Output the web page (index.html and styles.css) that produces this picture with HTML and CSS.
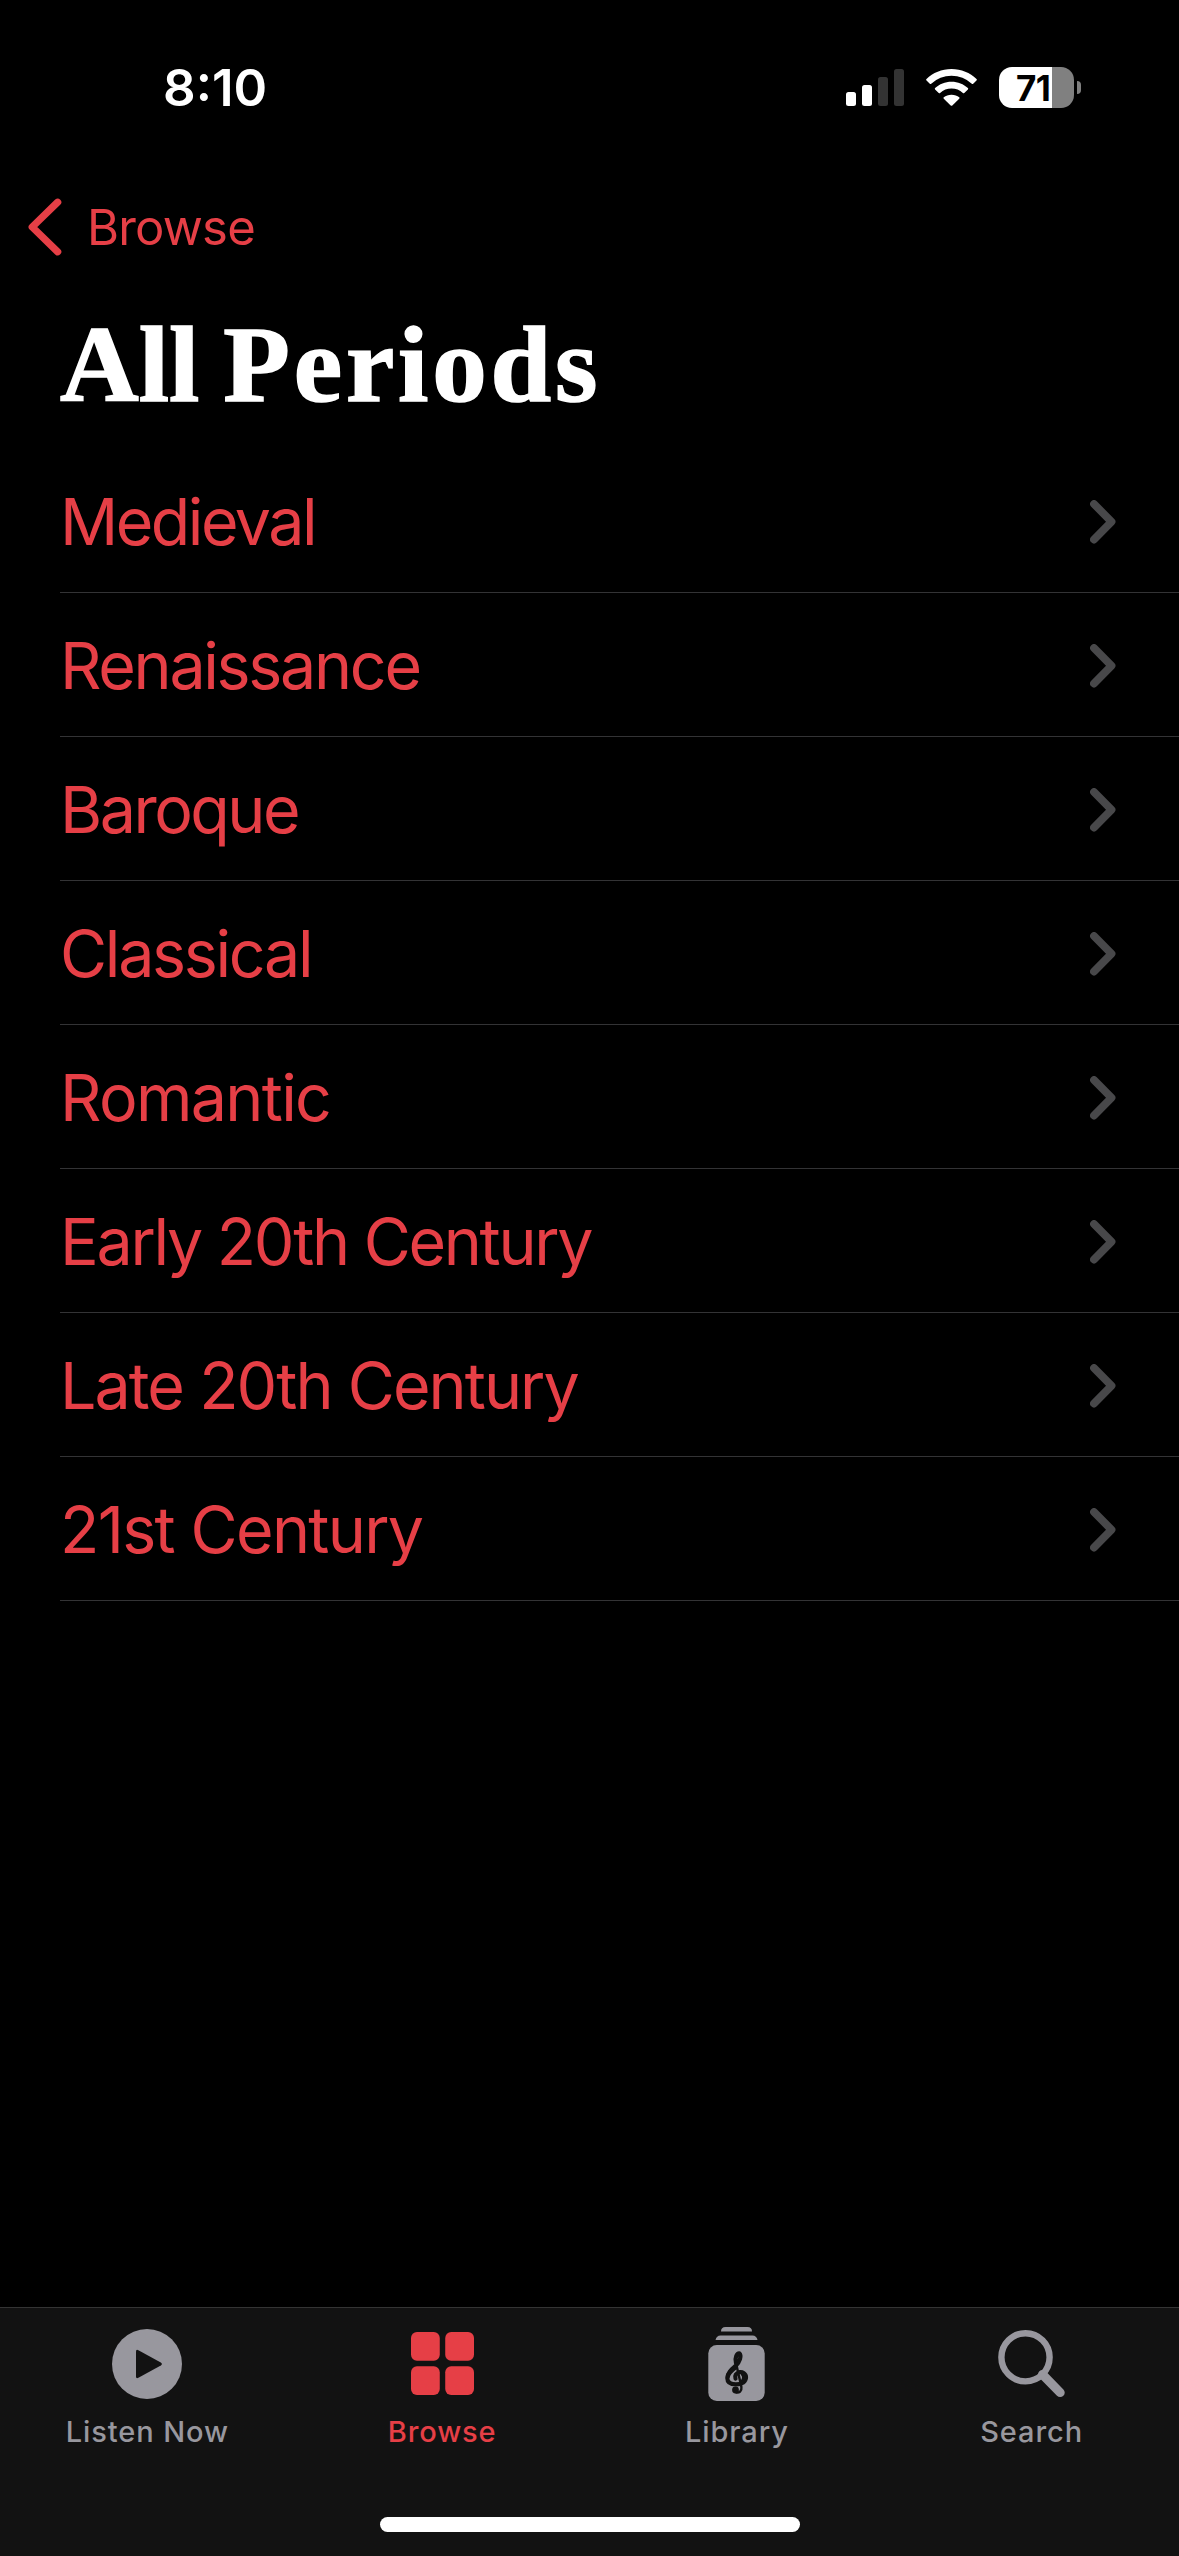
FILE: index.html
```html
<!DOCTYPE html>
<html lang="en">
<head>
<meta charset="utf-8">
<title>All Periods</title>
<link rel="stylesheet" href="styles.css">
</head>
<body>
<div class="screen">
  <header class="status">
    <span class="time">8:10</span>
    <div class="status-icons">
      <svg class="signal" width="58" height="37" viewBox="0 0 58 37">
        <rect x="0" y="23" width="10" height="14" rx="2.5"/>
        <rect x="16" y="16" width="10" height="21" rx="2.5"/>
        <rect class="dim" x="32" y="8" width="10" height="29" rx="2.5"/>
        <rect class="dim" x="48" y="0" width="10" height="37" rx="2.5"/>
      </svg>
      <svg class="wifi" width="51" height="37" viewBox="0 0 51 37">
        <path d="M25.5 0C35.3 0 44.1 3.8 50.5 10Q51.2 10.7 50.5 11.4L47.2 14.8Q46.5 15.4 45.8 14.8A29.3 29.3 0 0 0 5.2 14.8Q4.5 15.4 3.8 14.8L.5 11.4Q-.2 10.7 .5 10C6.9 3.8 15.7 0 25.5 0Z"/>
        <path d="M25.5 12.7C31.9 12.7 37.6 15.1 41.9 19Q42.6 19.7 41.9 20.4L38.3 24Q37.6 24.6 36.9 24A17 17 0 0 0 14.1 24Q13.4 24.6 12.7 24L9.1 20.4Q8.4 19.7 9.1 19C13.4 15.1 19.1 12.7 25.5 12.7Z"/>
        <path d="M25.5 25.7C28.6 25.7 31.3 26.7 33.2 28.3Q33.9 29 33.2 29.7L26.3 36.5Q25.5 37.2 24.7 36.5L17.8 29.7Q17.1 29 17.8 28.3C19.7 26.7 22.4 25.7 25.5 25.7Z"/>
      </svg>
      <div class="battery">
        <div class="battery-body">71</div>
        <div class="battery-cap"></div>
      </div>
    </div>
  </header>

  <nav class="nav">
    <svg width="34" height="58" viewBox="0 0 34 58"><path d="M29.7 4.2 4.2 29 29.7 53.8"/></svg>
    <span class="back">Browse</span>
  </nav>

  <h1 class="title"><span class="title-lead">All</span> Periods</h1>

  <main class="list">
    <div class="row tight"><span>Medieval</span><svg class="chevron" viewBox="0 0 26 44"><path d="M4 4 21.5 21.7 4 39.5"/></svg></div>
    <div class="row"><span>Renaissance</span><svg class="chevron" viewBox="0 0 26 44"><path d="M4 4 21.5 21.7 4 39.5"/></svg></div>
    <div class="row tight"><span>Baroque</span><svg class="chevron" viewBox="0 0 26 44"><path d="M4 4 21.5 21.7 4 39.5"/></svg></div>
    <div class="row"><span>Classical</span><svg class="chevron" viewBox="0 0 26 44"><path d="M4 4 21.5 21.7 4 39.5"/></svg></div>
    <div class="row loose"><span>Romantic</span><svg class="chevron" viewBox="0 0 26 44"><path d="M4 4 21.5 21.7 4 39.5"/></svg></div>
    <div class="row"><span>Early 20th Century</span><svg class="chevron" viewBox="0 0 26 44"><path d="M4 4 21.5 21.7 4 39.5"/></svg></div>
    <div class="row medium"><span>Late 20th Century</span><svg class="chevron" viewBox="0 0 26 44"><path d="M4 4 21.5 21.7 4 39.5"/></svg></div>
    <div class="row loose"><span>21st Century</span><svg class="chevron" viewBox="0 0 26 44"><path d="M4 4 21.5 21.7 4 39.5"/></svg></div>
  </main>

  <footer class="tabbar">
    <div class="tabs">
      <div class="tab">
        <div class="icon">
          <svg width="70" height="70" viewBox="0 0 70 70"><circle cx="35" cy="35" r="35"/><path class="cut" d="M24 22.5Q24 20 26.4 21.2L48.8 33.5Q51 35 48.8 36.5L26.4 48.8Q24 50 24 47.5Z"/></svg>
        </div>
        <span>Listen Now</span>
      </div>
      <div class="tab active">
        <div class="icon">
          <svg width="63" height="65" viewBox="0 0 63.5 65.5"><rect width="29" height="29" rx="6"/><rect x="34.5" width="29" height="29" rx="6"/><rect y="34.5" width="29" height="29" rx="6"/><rect x="34.5" y="34.5" width="29" height="29" rx="6"/></svg>
        </div>
        <span>Browse</span>
      </div>
      <div class="tab">
        <div class="icon">
          <svg width="57" height="74" viewBox="0 0 57 74">
            <path d="M13 4.5Q13 0 17.5 0H39.5Q44 0 44 4.5Z"/>
            <path d="M7.5 13Q8.5 8.5 12.5 8.5H44.5Q48.5 8.5 49.5 13Z"/>
            <rect x="0.3" y="18" width="56.4" height="56" rx="8.5"/>
            <path class="clef" d="M28 36C26.5 30 29 26.5 31.3 26.3C34 29 31.5 35 28 38.5C23 43 19.5 46 19.3 51C19.3 56 23.5 57.4 28 57.4C34 57.4 38 54.5 38 50.3C38 46.5 34.5 44.8 31.5 45.2C28 45.8 26.5 49 27.5 51.5"/>
            <path class="clef" d="M19.8 49.5C20.5 46 24 43 27.5 40.5M35 47.5C36.8 49 36.5 53 34 55"/>
            <path class="clef thin" d="M28 36 33.4 60C34 64.5 31 65.8 28.5 65.6"/>
            <circle class="cut" cx="27.5" cy="63" r="3.4"/>
          </svg>
        </div>
        <span>Library</span>
      </div>
      <div class="tab">
        <div class="icon">
          <svg width="68" height="68" viewBox="0 0 68 68"><circle class="lens" cx="27.5" cy="27.3" r="24.1"/><path class="handle" d="M44.5 44.5 62.2 62.6"/></svg>
        </div>
        <span>Search</span>
      </div>
    </div>
    <div class="home"></div>
  </footer>
</div>
</body>
</html>
```
FILE: styles.css
```css
* { box-sizing: border-box; }

body {
  margin: 0;
  background: #000;
  font-family: Inter, "Liberation Sans", sans-serif;
}

svg { display: block; flex: none; }

.screen {
  width: 1179px;
  height: 2556px;
  display: flex;
  flex-direction: column;
  overflow: hidden;
}

/* Status bar */
.status {
  height: 176px;
  display: flex;
  align-items: center;
  justify-content: space-between;
  padding: 0 98px 0 163px;
  color: #fff;
}

.time { font-size: 51px; line-height: 60px; font-weight: 600; }

.status-icons { display: flex; align-items: center; gap: 22px; padding-bottom: 1px; fill: #fff; }
.dim { fill: #333; }

.battery { display: flex; align-items: center; gap: 3px; }

.battery-body {
  width: 75px;
  height: 41px;
  border-radius: 13px;
  padding-left: 17px;
  background: linear-gradient(to right, #fff 53px, #808080 53px);
  color: #000;
  font-size: 35px;
  line-height: 42px;
  font-weight: 700;
  letter-spacing: -0.5px;
}

.battery-cap { width: 4px; height: 13px; border-radius: 0 4px 4px 0; background: #808080; }

/* Navigation */
.nav {
  height: 102px;
  padding-left: 28px;
  display: flex;
  align-items: center;
  gap: 25px;
  color: #e63f46;
}

.nav path {
  fill: none;
  stroke: #e63f46;
  stroke-width: 7.2;
  stroke-linecap: round;
  stroke-linejoin: round;
}

.back { padding-top: 1px; font-size: 49px; line-height: 60px; letter-spacing: -0.8px; }

.title {
  margin: 0;
  height: 171px;
  padding-left: 60px;
  color: #fff;
  font: bold 109px/174px "Liberation Serif", serif;
  letter-spacing: 3.8px;
  word-spacing: -7px;
  -webkit-text-stroke: 1.6px #fff;
}

.title-lead { letter-spacing: 0; }

/* Period list */
.list { flex: 1; padding-left: 60px; }

.row {
  height: 144px;
  display: flex;
  align-items: center;
  justify-content: space-between;
  padding: 2px 63px 0 0;
  border-bottom: 1px solid #333335;
  color: #e63f46;
  font-size: 64.5px;
  line-height: 80px;
  letter-spacing: -2.3px;
}

/* Tracking adjusted per label */
.tight { letter-spacing: -2.5px; }
.medium { letter-spacing: -1.95px; }
.loose { letter-spacing: -1.67px; }

.chevron {
  width: 26px;
  height: 44px;
  fill: none;
  stroke: #48484a;
  stroke-width: 7.8;
  stroke-linecap: round;
  stroke-linejoin: round;
}

/* Tab bar */
.tabbar {
  height: 249px;
  display: flex;
  flex-direction: column;
  align-items: center;
  justify-content: space-between;
  padding-bottom: 24px;
  border-top: 1px solid #343434;
  background: #121212;
}

.tabs { width: 100%; display: grid; grid-template-columns: repeat(4, 1fr); padding-top: 16px; }

.tab {
  display: flex;
  flex-direction: column;
  align-items: center;
  gap: 10px;
  color: #98979e;
  fill: #98979e;
  font-size: 29px;
  line-height: 36px;
  font-weight: 500;
  letter-spacing: 0.9px;
}

.tab.active { color: #e63f46; fill: #e63f46; }
.icon { height: 80px; display: flex; align-items: center; }
.cut { fill: #121212; }
.clef { fill: none; stroke: #121212; stroke-width: 4.2; stroke-linecap: round; stroke-linejoin: round; }
.thin { stroke-width: 2.4; }
.lens { fill: none; stroke: #98979e; stroke-width: 6.4; }
.handle { fill: none; stroke: #98979e; stroke-width: 9; stroke-linecap: round; }

.home { width: 420px; height: 15px; border-radius: 8px; background: #fff; }
```
